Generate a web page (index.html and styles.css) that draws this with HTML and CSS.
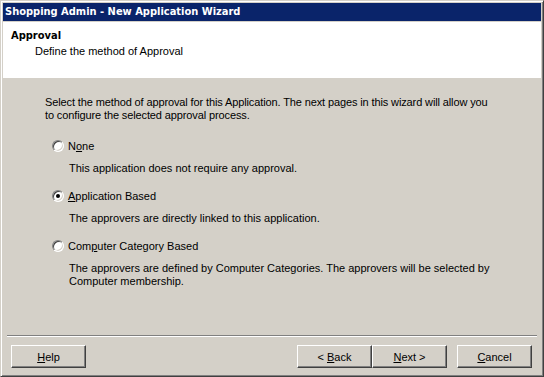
FILE: index.html
```html
<!DOCTYPE html>
<html lang="en">

<head>
    <meta charset="UTF-8">
    <title>Shopping Admin - New Application Wizard</title>
    <link rel="stylesheet" href="styles.css">
</head>

<body>

    <div class="window">
        <div class="title-bar">Shopping Admin - New Application Wizard</div>

        <div class="wizard-header">
            <div class="header-title">Approval</div>
            <div class="header-subtitle">Define the method of Approval</div>
        </div>

        <div class="wizard-body">
            <p class="intro">Select the method of approval for this Application. The next pages in this wizard will allow you<br>to configure the selected approval process.</p>

            <div class="option">
                <label class="option-row"><span class="radio"></span>N<u>o</u>ne</label>
                <p class="option-desc">This application does not require any approval.</p>
            </div>

            <div class="option">
                <label class="option-row"><span class="radio checked"></span><u>A</u>pplication Based</label>
                <p class="option-desc">The approvers are directly linked to this application.</p>
            </div>

            <div class="option">
                <label class="option-row"><span class="radio"></span>Com<u>p</u>uter Category Based</label>
                <p class="option-desc">The approvers are defined by Computer Categories. The approvers will be selected by<br>Computer membership.</p>
            </div>
        </div>

        <div class="wizard-footer">
            <div class="separator"></div>
            <div class="button-row">
                <button class="btn"><u>H</u>elp</button>
                <div class="spacer"></div>
                <button class="btn">&lt; <u>B</u>ack</button>
                <button class="btn"><u>N</u>ext &gt;</button>
                <button class="btn btn-cancel"><u>C</u>ancel</button>
            </div>
        </div>
    </div>

</body>

</html>
```

FILE: styles.css
```css
/* Page */
body {
    margin: 0;
    background-color: #d4d0c8;
    font-family: "Liberation Sans", Arial, sans-serif;
    font-size: 11px;
    color: #000;
}

/* Window frame */
.window {
    width: 544px;
    height: 377px;
    box-sizing: border-box;
    display: flex;
    flex-direction: column;
    background-color: #d4d0c8;
    border: 1px solid;
    border-color: #d4d0c8 #404040 #404040 #d4d0c8;
    box-shadow: inset 1px 1px #fff, inset -1px -1px #808080;
    padding: 2px;
}

.title-bar {
    height: 18px;
    line-height: 18px;
    padding-left: 2px;
    margin-bottom: 1px;
    background-color: #0a246a;
    color: #fff;
    font-family: "DejaVu Sans", sans-serif;
    font-stretch: condensed;
    font-weight: bold;
    white-space: nowrap;
}

/* Header */
.wizard-header {
    height: 56px;
    box-sizing: border-box;
    padding: 7px 8px 0;
    background-color: #fff;
}

.header-title {
    font-family: "DejaVu Sans", sans-serif;
    font-stretch: condensed;
    font-weight: bold;
    line-height: 14px;
}

.header-subtitle {
    line-height: 14px;
    margin-top: 1px;
    padding-left: 24px;
}

/* Body */
.wizard-body {
    flex: 1;
    padding: 18px 0 0 42px;
}

.wizard-body p {
    margin: 0;
    line-height: 13px;
}

.intro {
    letter-spacing: -0.12px;
}

.option {
    margin-top: 17px;
}

.option + .option {
    margin-top: 14px;
}

.option-row {
    display: flex;
    align-items: center;
    height: 13px;
    margin-left: 7px;
}

.option-desc {
    margin-top: 10px !important;
    padding-left: 24px;
}

/* Radio buttons */
.radio {
    position: relative;
    width: 12px;
    height: 12px;
    box-sizing: border-box;
    margin-right: 4px;
    border-radius: 50%;
    border: 1px solid;
    border-color: #808080 #fff #fff #808080;
    background-color: #fff;
    box-shadow: inset 1px 1px #404040, inset -1px -1px #d4d0c8;
}

.radio.checked::after {
    content: "";
    position: absolute;
    left: 3px;
    top: 3px;
    width: 4px;
    height: 4px;
    border-radius: 50%;
    background-color: #000;
}

/* Footer */
.wizard-footer {
    height: 39px;
}

.separator {
    margin: 0 4px;
    border-top: 1px solid #808080;
    border-bottom: 1px solid #fff;
}

.button-row {
    display: flex;
    padding: 8px 9px 0 8px;
}

.spacer {
    flex: 1;
}

.btn {
    width: 75px;
    height: 23px;
    padding: 0;
    font: inherit;
    color: #000;
    background-color: #d4d0c8;
    border: 1px solid;
    border-color: #fff #404040 #404040 #fff;
    box-shadow: inset -1px -1px #808080;
}

.btn-cancel {
    margin-left: 10px;
}
```
